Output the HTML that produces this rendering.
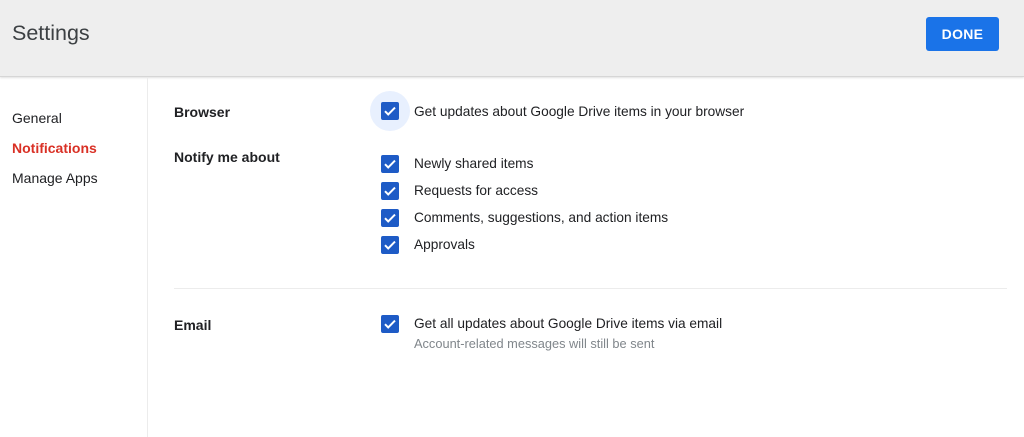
<!DOCTYPE html>
<html><head><style>
*{margin:0;padding:0;box-sizing:border-box}
body{width:1024px;height:437px;overflow:hidden;background:#fff;font-family:"Liberation Sans",Arial,sans-serif;position:relative;color:#202124}
.hdr{position:absolute;left:0;top:0;width:1024px;height:77px;background:#eeeeee;border-bottom:1px solid #d6d6d6;box-shadow:0 1px 2px rgba(0,0,0,.12)}
.title{position:absolute;left:12px;top:21px;font-size:21.5px;color:#3c4043}
.done{position:absolute;left:926px;top:17px;width:73px;height:34px;background:#1a73e8;border-radius:3px;color:#fff;font-size:14px;font-weight:bold;text-align:center;line-height:34px;letter-spacing:.3px}
.side{position:absolute;left:147px;top:78px;width:1px;height:359px;background:#ececec}
.nav{position:absolute;left:12px;font-size:14px;color:#202124}
.lab{position:absolute;left:174px;font-size:14px;font-weight:bold;color:#202124}
.t{position:absolute;left:414px;font-size:13.7px;color:#202124;white-space:nowrap}
.cb{position:absolute;left:381px;width:18px;height:18px;background:#1e5bc6;border-radius:2px}
.cb svg{position:absolute;left:0;top:0}
.halo{position:absolute;left:370px;top:91px;width:40px;height:40px;border-radius:50%;background:#e8f0fe}
.div{position:absolute;left:174px;top:288px;width:833px;height:1px;background:#ececec}
</style></head><body>
<div class="hdr"><div class="title">Settings</div><div class="done">DONE</div></div>
<div class="side"></div>
<div class="nav" style="top:110px">General</div>
<div class="nav" style="top:140px;color:#d93025;font-weight:bold">Notifications</div>
<div class="nav" style="top:170px">Manage Apps</div>
<div class="lab" style="top:104px">Browser</div>
<div class="lab" style="top:149px">Notify me about</div>
<div class="lab" style="top:317px">Email</div>
<div class="halo"></div>
<div class="cb" style="top:102px"><svg width="18" height="18"><path d="M4 9.2l3.2 3.2L14 5.6" stroke="#fff" stroke-width="2" fill="none"/></svg></div>
<div class="t" style="top:104px">Get updates about Google Drive items in your browser</div>
<div class="cb" style="top:155px"><svg width="18" height="18"><path d="M4 9.2l3.2 3.2L14 5.6" stroke="#fff" stroke-width="2" fill="none"/></svg></div>
<div class="t" style="top:156px">Newly shared items</div>
<div class="cb" style="top:182px"><svg width="18" height="18"><path d="M4 9.2l3.2 3.2L14 5.6" stroke="#fff" stroke-width="2" fill="none"/></svg></div>
<div class="t" style="top:183px">Requests for access</div>
<div class="cb" style="top:209px"><svg width="18" height="18"><path d="M4 9.2l3.2 3.2L14 5.6" stroke="#fff" stroke-width="2" fill="none"/></svg></div>
<div class="t" style="top:210px">Comments, suggestions, and action items</div>
<div class="cb" style="top:236px"><svg width="18" height="18"><path d="M4 9.2l3.2 3.2L14 5.6" stroke="#fff" stroke-width="2" fill="none"/></svg></div>
<div class="t" style="top:237px">Approvals</div>
<div class="div"></div>
<div class="cb" style="top:315px"><svg width="18" height="18"><path d="M4 9.2l3.2 3.2L14 5.6" stroke="#fff" stroke-width="2" fill="none"/></svg></div>
<div class="t" style="top:316px">Get all updates about Google Drive items via email</div>
<div class="t" style="top:336px;font-size:12.8px;color:#80868b">Account-related messages will still be sent</div>
</body></html>
